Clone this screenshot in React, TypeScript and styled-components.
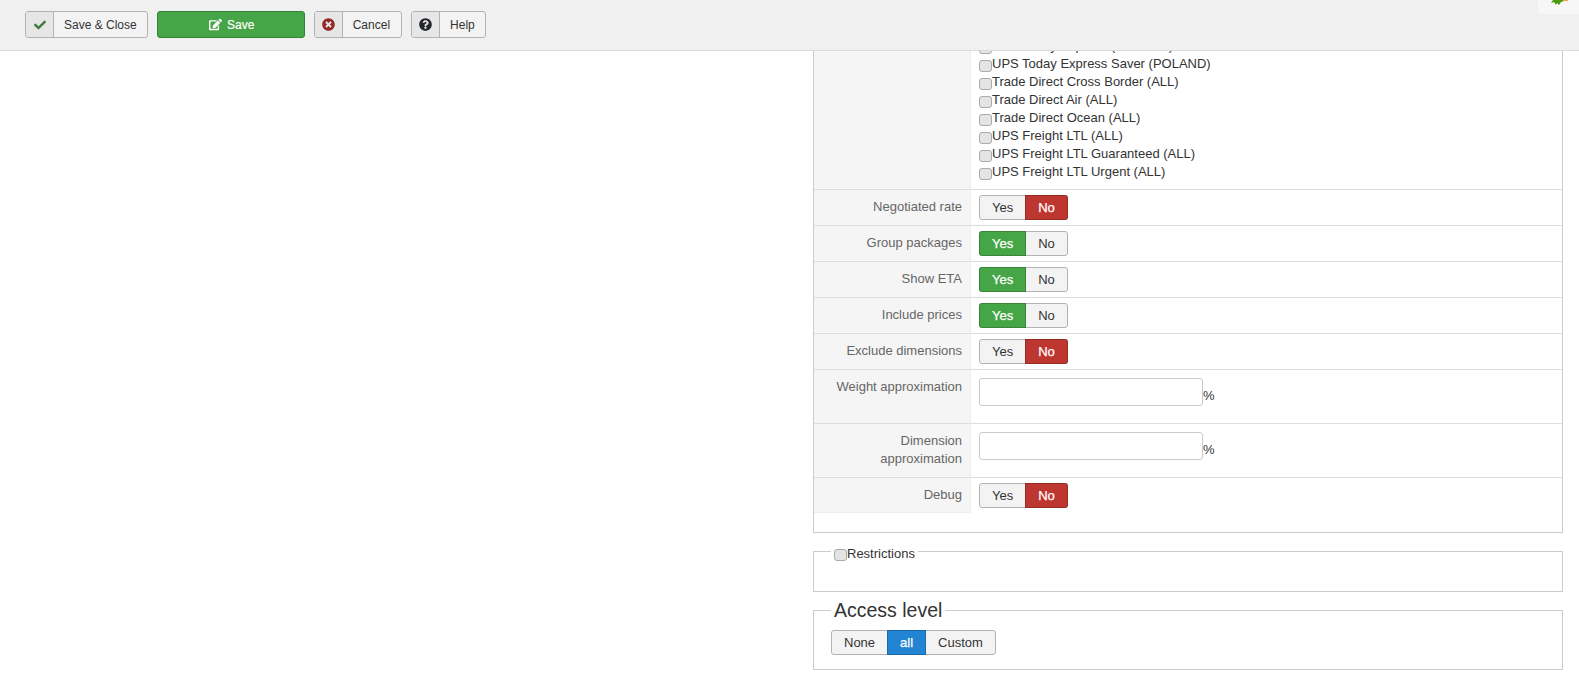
import { FaCheck, FaEdit, FaQuestionCircle, FaTimesCircle } from "react-icons/fa";
import styled, { createGlobalStyle } from "styled-components";

const GlobalStyle = createGlobalStyle`
  html, body {
    margin: 0;
    height: 100%;
    overflow: hidden;
    background: #ffffff;
    color: #333333;
    font-family: "Liberation Sans", Arial, sans-serif;
    font-size: 13px;
    line-height: 18px;
  }
  #root {
    height: 100%;
  }
`;

const Page = styled.div`
  height: 100%;
  display: flex;
  flex-direction: column;
`;

const Toolbar = styled.div`
  position: relative;
  flex: 0 0 51px;
  box-sizing: border-box;
  display: flex;
  align-items: flex-start;
  gap: 9px;
  padding: 11px 0 0 25px;
  background: #f0f0f0;
  border-bottom: 1px solid #dcdcdc;
`;

const ToolButton = styled.button`
  height: 27px;
  box-sizing: border-box;
  display: flex;
  align-items: stretch;
  padding: 0;
  background: #f3f3f3;
  border: 1px solid #b3b3b3;
  border-radius: 3px;
  color: #333333;
  font-family: inherit;
  font-size: 12px;
`;

const ToolIcon = styled.span<{ $color: string }>`
  width: 27px;
  display: flex;
  align-items: center;
  justify-content: center;
  background: #e6e6e6;
  border-right: 1px solid #b3b3b3;
  border-radius: 2px 0 0 2px;
  color: ${(p) => p.$color};
  font-size: 13px;
`;

const ToolLabel = styled.span<{ $right?: number }>`
  display: flex;
  align-items: center;
  padding: 0 ${(p) => p.$right ?? 10}px 0 10px;
`;

const SaveButton = styled.button`
  width: 148px;
  height: 27px;
  box-sizing: border-box;
  display: flex;
  align-items: center;
  justify-content: center;
  gap: 5px;
  padding: 0 0 0 2px;
  background: #46a546;
  border: 1px solid #378137;
  border-radius: 3px;
  color: #ffffff;
  font-family: inherit;
  font-size: 12px;
  -webkit-text-stroke: 0.2px #ffffff;
`;

const LogoCorner = styled.div`
  position: absolute;
  top: 0;
  right: 0;
  width: 41px;
  height: 14px;
  background: #f7f7f7;
`;

const LogoMark = styled.svg`
  display: block;
  margin-left: 13px;
`;

const Main = styled.main`
  flex: 1;
  min-height: 0;
  overflow: hidden;
  display: flex;
  flex-direction: column;
  justify-content: flex-end;
  padding: 0 16px 15px 813px;
`;

const SettingsBox = styled.div`
  flex-shrink: 0;
  border: 1px solid #cccccc;
  padding-bottom: 19px;
`;

const Row = styled.div`
  display: grid;
  grid-template-columns: 157px 1fr;
`;

const LabelCell = styled.div<{ $last?: boolean }>`
  box-sizing: border-box;
  padding: 8px 8px 8px 12px;
  background: #f5f5f5;
  border-top: 1px solid #dddddd;
  border-right: 1px solid #eeeeee;
  border-bottom: ${(p) => (p.$last ? "1px solid #eeeeee" : "0")};
  color: #666666;
  text-align: right;
`;

const ValueCell = styled.div<{ $tall?: boolean }>`
  box-sizing: border-box;
  display: flex;
  align-items: flex-start;
  height: ${(p) => (p.$tall ? "54px" : "36px")};
  padding: ${(p) => (p.$tall ? "8px" : "5px")} 8px 0;
  border-top: 1px solid #dddddd;
`;

const ListLabelCell = styled.div`
  background: #f5f5f5;
  border-right: 1px solid #eeeeee;
`;

const ServiceList = styled.div`
  padding: 0 8px 8px;
`;

const ServiceRow = styled.label`
  display: flex;
  align-items: flex-end;
  height: 18px;
`;

const Check = styled.input.attrs({ type: "checkbox" })`
  appearance: none;
  flex-shrink: 0;
  width: 13px;
  height: 12px;
  margin: 0 0 1px;
  background: #e4e4e4;
  border: 1px solid #aaaaaa;
  border-radius: 3px;
  box-sizing: border-box;
`;

const Segments = styled.div`
  display: inline-flex;
  height: 25px;
`;

const Segment = styled.button<{ $tone?: string }>`
  box-sizing: border-box;
  height: 100%;
  margin-left: -1px;
  padding: 0 12px;
  background: ${(p) => p.$tone ?? "#f3f3f3"};
  border: 1px solid ${(p) => (p.$tone ? "rgba(0, 0, 0, 0.2)" : "#b3b3b3")};
  color: ${(p) => (p.$tone ? "#ffffff" : "#333333")};
  font-family: inherit;
  font-size: 13px;
  -webkit-text-stroke: ${(p) => (p.$tone ? "0.25px #ffffff" : "0")};
  position: relative;
  z-index: ${(p) => (p.$tone ? 1 : 0)};

  &:first-child {
    margin-left: 0;
    border-radius: 3px 0 0 3px;
  }
  &:last-child {
    border-radius: 0 3px 3px 0;
  }
`;

const PercentInput = styled.input`
  width: 224px;
  height: 28px;
  box-sizing: border-box;
  background: #ffffff;
  border: 1px solid #cccccc;
  border-radius: 3px;
`;

const Unit = styled.span`
  align-self: flex-start;
  margin-top: 9px;
`;

const GroupBox = styled.fieldset<{ $top: number; $bottom: number }>`
  flex-shrink: 0;
  margin: ${(p) => p.$top}px 0 0;
  min-width: 0;
  padding: 0 0 ${(p) => p.$bottom}px 17px;
  border: 1px solid #cccccc;
`;

const SmallLegend = styled.legend`
  display: flex;
  align-items: center;
  padding: 5px 3px 0;
  height: 23px;
  box-sizing: border-box;
`;

const LegendCheck = styled(Check)`
  margin: 1px 0 0;
`;

const BigLegend = styled.legend`
  padding: 0 3px;
  color: #333333;
  font-size: 19.5px;
  line-height: 24px;
`;

const AccessRow = styled.div`
  margin-top: 8px;
`;

const services = [
  "UPS Today Express (POLAND)",
  "UPS Today Express Saver (POLAND)",
  "Trade Direct Cross Border (ALL)",
  "Trade Direct Air (ALL)",
  "Trade Direct Ocean (ALL)",
  "UPS Freight LTL (ALL)",
  "UPS Freight LTL Guaranteed (ALL)",
  "UPS Freight LTL Urgent (ALL)",
];

const GREEN = "#46a546";
const RED = "#bd362f";
const BLUE = "#2384d3";

function YesNo({ value }: { value: boolean }) {
  return (
    <Segments>
      <Segment $tone={value ? GREEN : undefined}>Yes</Segment>
      <Segment $tone={value ? undefined : RED}>No</Segment>
    </Segments>
  );
}

function ToggleRow({ label, value, last }: { label: string; value: boolean; last?: boolean }) {
  return (
    <Row>
      <LabelCell $last={last}>{label}</LabelCell>
      <ValueCell>
        <YesNo value={value} />
      </ValueCell>
    </Row>
  );
}

function PercentRow({ label }: { label: string }) {
  return (
    <Row>
      <LabelCell>{label}</LabelCell>
      <ValueCell $tall>
        <PercentInput type="text" />
        <Unit>%</Unit>
      </ValueCell>
    </Row>
  );
}

export default function App() {
  return (
    <Page>
      <GlobalStyle />
      <Toolbar>
        <ToolButton>
          <ToolIcon $color="#3c7d3c">
            <FaCheck size={12} />
          </ToolIcon>
          <ToolLabel>Save &amp; Close</ToolLabel>
        </ToolButton>
        <SaveButton>
          <FaEdit size={13} />
          Save
        </SaveButton>
        <ToolButton>
          <ToolIcon $color="#942a25">
            <FaTimesCircle size={13} />
          </ToolIcon>
          <ToolLabel $right={11}>Cancel</ToolLabel>
        </ToolButton>
        <ToolButton>
          <ToolIcon $color="#23272b">
            <FaQuestionCircle size={13} />
          </ToolIcon>
          <ToolLabel>Help</ToolLabel>
        </ToolButton>
        <LogoCorner>
          <LogoMark width="20" height="6" viewBox="0 0 20 6">
            <path d="M0 3 L2 0 L12 0 L13 1 L10 2 L8 5 L6 3 L5 5 L3 2 Z" fill="#4c9a0c" />
            <rect x="12" y="0" width="5" height="1" fill="#f5a04a" />
          </LogoMark>
        </LogoCorner>
      </Toolbar>
      <Main>
        <SettingsBox>
          <Row>
            <ListLabelCell />
            <ServiceList>
              {services.map((name) => (
                <ServiceRow key={name}>
                  <Check />
                  {name}
                </ServiceRow>
              ))}
            </ServiceList>
          </Row>
          <ToggleRow label="Negotiated rate" value={false} />
          <ToggleRow label="Group packages" value={true} />
          <ToggleRow label="Show ETA" value={true} />
          <ToggleRow label="Include prices" value={true} />
          <ToggleRow label="Exclude dimensions" value={false} />
          <PercentRow label="Weight approximation" />
          <PercentRow label="Dimension approximation" />
          <ToggleRow label="Debug" value={false} last />
        </SettingsBox>
        <GroupBox $top={7} $bottom={28}>
          <SmallLegend>
            <LegendCheck />
            Restrictions
          </SmallLegend>
        </GroupBox>
        <GroupBox $top={6} $bottom={14}>
          <BigLegend>Access level</BigLegend>
          <AccessRow>
            <Segments>
              <Segment>None</Segment>
              <Segment $tone={BLUE}>all</Segment>
              <Segment>Custom</Segment>
            </Segments>
          </AccessRow>
        </GroupBox>
      </Main>
    </Page>
  );
}
